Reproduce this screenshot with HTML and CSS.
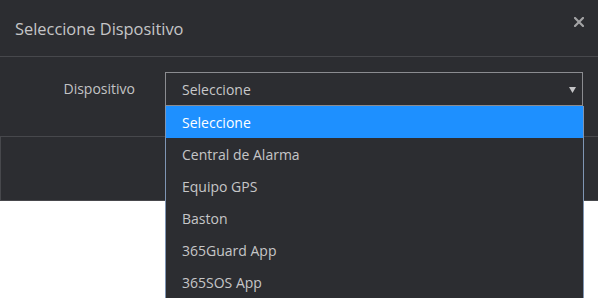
FILE: index.html
```html
<!DOCTYPE html>
<html lang="es">
<head>
<meta charset="utf-8">
<title>Seleccione Dispositivo</title>
<link rel="stylesheet" href="styles.css">
</head>
<body>
<div class="modal">
  <div class="modal-header">
    <h4 class="modal-title">Seleccione Dispositivo</h4>
    <button class="close" aria-label="Cerrar">
      <svg width="10" height="10" viewBox="0 0 10 10"><path d="M1 1 L9 9 M9 1 L1 9" stroke="#a3a3a5" stroke-width="2.2" stroke-linecap="square"/></svg>
    </button>
  </div>
  <div class="modal-body">
    <label class="control-label">Dispositivo</label>
    <div class="select-wrap">
      <div class="select">
        <span>Seleccione</span>
        <svg class="caret" width="7" height="6" viewBox="0 0 7 6"><path d="M0 0 H7 L3.5 6 Z" fill="#c4c4c6"/></svg>
      </div>
      <ul class="dropdown">
        <li class="active">Seleccione</li>
        <li>Central de Alarma</li>
        <li>Equipo GPS</li>
        <li>Baston</li>
        <li>365Guard App</li>
        <li>365SOS App</li>
      </ul>
    </div>
  </div>
  <div class="modal-footer"></div>
</div>
</body>
</html>
```
FILE: styles.css
```css
html, body {
  margin: 0;
  padding: 0;
  background: #ffffff;
}
body {
  font-family: "Open Sans", "Noto Sans", sans-serif;
  width: 598px;
  height: 298px;
  overflow: hidden;
}
.modal {
  width: 598px;
  background: #2c2d31;
}
.modal-header {
  border-bottom: 1px solid #47484c;
  display: flex;
  align-items: center;
  justify-content: space-between;
  padding: 0 14px 0 15px;
  box-sizing: border-box;
  height: 57px;
}
.modal-title {
  margin: 0;
  font-size: 16.4px;
  font-weight: 400;
  color: #c5c5c7;
  line-height: 20px;
  padding-top: 2px;
}
.close {
  background: none;
  border: 0;
  padding: 0;
  margin-top: -13px;
  display: flex;
}
.modal-body {
  display: flex;
  align-items: flex-start;
  padding: 15px 0 0 0;
  height: 79px;
  box-sizing: border-box;
}
.control-label {
  width: 135px;
  text-align: right;
  font-size: 14px;
  color: #c3c3c5;
  line-height: 34px;
  margin-right: 30px;
}
.select-wrap {
  position: relative;
  width: 418px;
}
.select {
  height: 34px;
  box-sizing: border-box;
  border: 1px solid #8b8c90;
  display: flex;
  align-items: center;
  justify-content: space-between;
  padding: 0 6px 0 16px;
  font-size: 14px;
  color: #c8c8ca;
}
.caret {
  margin-top: 1px;
}
.dropdown {
  position: absolute;
  top: 34px;
  left: 0;
  width: 419px;
  margin: 0;
  padding: 0;
  list-style: none;
  box-sizing: border-box;
  border-left: 1px solid #7f95b3;
  border-right: 1px solid #7f95b3;
  border-bottom: 1px solid #7f95b3;
  background: #2c2d31;
  z-index: 2;
}
.dropdown li {
  height: 32px;
  box-sizing: border-box;
  padding-top: 2px;
  line-height: 30px;
  padding-left: 16px;
  font-size: 14px;
  color: #c6c6c8;
}
.dropdown li.active {
  background: #1e90ff;
  color: #ffffff;
}
.modal-footer {
  height: 65px;
  box-sizing: border-box;
  border: 1px solid #47484c;
  border-right: 0;
}
```
